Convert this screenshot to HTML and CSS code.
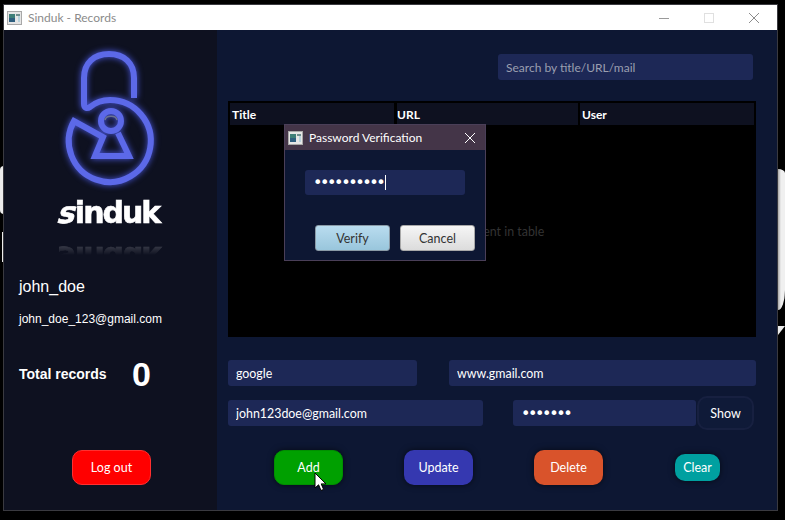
FILE: index.html
```html
<!DOCTYPE html>
<html lang="en">
<head>
  <meta charset="UTF-8">
  <meta name="viewport" content="width=device-width, initial-scale=1.0">
  <title>Sinduk - Records</title>
  <link rel="stylesheet" href="styles.css">
</head>
<body>
  <span class="blob blob-left-a"></span>
  <span class="blob blob-left-b"></span>
  <span class="blob blob-right-a"></span>
  <span class="blob blob-right-b"></span>

  <div class="window">
    <div class="titlebar">
      <svg class="app-icon" viewBox="0 0 15 14">
        <rect x="0.5" y="0.5" width="14" height="13" fill="#e6e6e6" stroke="#a8a8a8"/>
        <rect x="2" y="3" width="6" height="8" fill="#3f7f78"/>
        <rect x="2" y="7" width="6" height="4" fill="#2f5f7f"/>
        <rect x="9" y="3" width="4" height="2" fill="#6f8f8f"/>
        <rect x="11" y="5" width="2" height="6" fill="#b9d3dd"/>
      </svg>
      <span class="titlebar-text">Sinduk - Records</span>
      <div class="window-controls">
        <svg viewBox="0 0 10 10"><path d="M0 5.5H10" stroke="#9a9a9a" fill="none"/></svg>
        <svg viewBox="0 0 10 10"><rect x="0.5" y="0.5" width="9" height="9" stroke="#e0e0e0" fill="none"/></svg>
        <svg viewBox="0 0 10 10"><path d="M0 0L10 10M10 0L0 10" stroke="#8c8c8c" fill="none"/></svg>
      </div>
    </div>

    <div class="content">
      <aside class="sidebar">
        <svg class="logo" viewBox="0 0 100 150">
          <!-- shackle runs into the ring, ring ends in the keyhole -->
          <path d="M68 62V42C68 27 58 18 43 18C28 18 18 27 18 42V68C18 72 21 73 24 71C30 66 37 64 44 64A41 41 0 1 1 8 85L37 101L29 120H63L52 97" fill="none" stroke="#5c69e8" stroke-width="6"/>
          <circle cx="45" cy="85" r="10" fill="none" stroke="#5c69e8" stroke-width="6"/>
          <path d="M39 84C40 79 50 79 51 84" fill="none" stroke="#6b7390" stroke-width="1.5"/>
        </svg>
        <div class="brand"><span class="brand-s">s</span>induk</div>
        <div class="user-name">john_doe</div>
        <div class="user-mail">john_doe_123@gmail.com</div>
        <div class="totals">
          <span class="totals-label">Total records</span>
          <span class="totals-count">0</span>
        </div>
        <button class="btn btn-logout">Log out</button>
      </aside>

      <main class="main">
        <div class="search-row">
          <input class="field search" type="text" placeholder="Search by title/URL/mail">
        </div>

        <div class="table">
          <div class="table-head">
            <div class="cell cell-title">Title</div>
            <div class="cell cell-url">URL</div>
            <div class="cell cell-user">User</div>
          </div>
          <div class="table-empty">No content in table</div>
        </div>

        <div class="form-row">
          <input class="field field-title" type="text" value="google">
          <input class="field field-url" type="text" value="www.gmail.com">
        </div>
        <div class="form-row form-row-second">
          <input class="field field-mail" type="text" value="john123doe@gmail.com">
          <input class="field field-pass" type="password" value="1234567">
          <button class="btn btn-show">Show</button>
        </div>

        <div class="actions">
          <button class="btn btn-add">Add</button>
          <button class="btn btn-update">Update</button>
          <button class="btn btn-delete">Delete</button>
          <button class="btn btn-clear">Clear</button>
        </div>
      </main>
    </div>

    <div class="dialog">
      <div class="dialog-title">
        <svg class="app-icon" viewBox="0 0 15 14">
          <rect x="0.5" y="0.5" width="14" height="13" fill="#e6e6e6" stroke="#a8a8a8"/>
          <rect x="2" y="3" width="6" height="8" fill="#3f7f78"/>
          <rect x="2" y="7" width="6" height="4" fill="#2f5f7f"/>
          <rect x="9" y="3" width="4" height="2" fill="#6f8f8f"/>
          <rect x="11" y="5" width="2" height="6" fill="#b9d3dd"/>
        </svg>
        <span>Password Verification</span>
        <svg class="dialog-close" viewBox="0 0 10 10"><path d="M0 0L10 10M10 0L0 10" stroke="#ffffff" fill="none"/></svg>
      </div>
      <div class="dialog-body">
        <div class="dialog-field-wrap">
          <input class="field field-pass dialog-field" type="password" value="1234567890">
          <span class="caret"></span>
        </div>
        <div class="dialog-actions">
          <button class="dialog-btn dialog-verify">Verify</button>
          <button class="dialog-btn dialog-cancel">Cancel</button>
        </div>
      </div>
    </div>

    <svg class="cursor" viewBox="0 0 13 20">
      <path d="M1 1V16L4.6 12.8L7 18.5L9.6 17.4L7.2 11.9H12Z" fill="#ffffff" stroke="#000000"/>
    </svg>
  </div>
</body>
</html>
```

FILE: styles.css
```css
* {
  box-sizing: border-box;
}
body {
  margin: 0;
  width: 785px;
  height: 520px;
  overflow: hidden;
  position: relative;
  background-color: #000;
  font-family: Lato, sans-serif;
}

/* bits of the desktop picture showing round the window */
.blob {
  position: absolute;
  background-color: #ececec;
}
.blob-left-a {
  left: 0;
  top: 166px;
  width: 4px;
  height: 48px;
  border-radius: 4px 0 0 4px;
}
.blob-left-b {
  left: 2px;
  top: 232px;
  width: 2px;
  height: 30px;
}
.blob-right-a {
  left: 778px;
  top: 169px;
  width: 7px;
  height: 141px;
  background: linear-gradient(90deg, #a8a8a8, #f0f0f0 3px);
  border-radius: 0 7px 7px 0 / 0 4px 20px 0;
}
.blob-right-b {
  left: 778px;
  top: 326px;
  width: 7px;
  height: 9px;
  clip-path: polygon(0 0, 100% 0, 0 100%);
}

.window {
  position: absolute;
  left: 3px;
  top: 4px;
  width: 775px;
  height: 507px;
  border: 1px solid #3a3a40;
  display: flex;
  flex-direction: column;
}
.titlebar {
  height: 25px;
  flex: none;
  background-color: #fff;
  display: flex;
  align-items: center;
  padding-left: 3px;
}
.app-icon {
  width: 15px;
  height: 14px;
  flex: none;
}
.titlebar-text {
  margin-left: 6px;
  font-size: 12px;
  color: #8b8b8b;
}
.window-controls {
  margin-left: auto;
  display: flex;
  gap: 35px;
  padding-right: 18px;
}
.window-controls svg {
  width: 10px;
  height: 10px;
}

.content {
  flex: 1;
  display: flex;
  min-height: 0;
}
.sidebar {
  width: 213px;
  flex: none;
  background-color: #0e1120;
  display: flex;
  flex-direction: column;
  padding: 0 0 0 15px;
  color: #fff;
  font-family: "Liberation Sans", Arial, sans-serif;
}
.logo {
  width: 100px;
  height: 150px;
  margin: 6px 0 0 47px;
  overflow: visible;
  filter: drop-shadow(0 0 3px #4a58e0);
  flex: none;
}
.brand {
  width: 104px;
  margin: 9px 0 0 40px;
  font-family: "DejaVu Sans", sans-serif;
  font-weight: bold;
  font-size: 30px;
  line-height: 36px;
  letter-spacing: -2px;
  white-space: nowrap;
  -webkit-text-stroke: 0.6px #fff;
  -webkit-box-reflect: below 8px linear-gradient(transparent 55%, rgba(255, 255, 255, 0.3));
}
.brand-s {
  display: inline-block;
  transform: skewX(-18deg);
}
.user-name {
  margin-top: 46px;
  font-size: 16px;
  line-height: 20px;
}
.user-mail {
  margin-top: 14px;
  font-size: 12px;
  line-height: 16px;
}
.totals {
  margin-top: 27px;
  display: flex;
  align-items: center;
  height: 40px;
}
.totals-label {
  font-size: 14px;
  font-weight: bold;
  width: 113px;
}
.totals-count {
  font-size: 34px;
  font-weight: bold;
}

.btn {
  font-family: Lato, sans-serif;
  font-size: 12.5px;
  color: #fff;
  border: 1px solid transparent;
  border-radius: 10px;
  padding: 0;
  width: 69px;
  height: 35px;
  cursor: pointer;
  box-shadow: 0 0 6px rgba(0, 0, 0, 0.6);
}
.btn-logout {
  margin: 56px 0 0 53px;
  width: 79px;
  background-color: #ff0000;
  border-color: #ff3030;
  box-shadow: none;
  flex: none;
}

.main {
  flex: 1;
  background-color: #0d1733;
  padding: 24px 21px 0 11px;
}
.search-row {
  display: flex;
  justify-content: flex-end;
  padding-right: 3px;
}
.field {
  height: 26px;
  background-color: #1d2856;
  border: none;
  border-radius: 3px;
  color: #fff;
  font-family: Lato, sans-serif;
  font-size: 12.4px;
  padding: 0 8px;
  outline: none;
}
.search {
  width: 255px;
  font-size: 12px;
}
.search::placeholder {
  color: #9a9fb0;
  opacity: 1;
}

.table {
  margin-top: 21px;
  height: 236px;
  background-color: #000;
  padding-top: 2px;
  display: flex;
  flex-direction: column;
}
.table-head {
  display: flex;
  height: 22px;
  padding: 0 2px;
  flex: none;
}
.cell {
  background-color: #0e1120;
  color: #fff;
  font-size: 12px;
  font-weight: bold;
  line-height: 24px;
  padding-left: 2px;
}
.cell-title {
  width: 164px;
}
.cell-url {
  width: 181px;
  margin-left: 3px;
  padding-left: 0;
}
.cell-user {
  width: 174px;
  margin-left: 2px;
}
.table-empty {
  flex: 1;
  display: flex;
  align-items: center;
  justify-content: center;
  font-size: 12.4px;
  color: #333;
}

.form-row {
  margin-top: 23px;
  display: flex;
}
.field-title {
  width: 189px;
}
.field-url {
  width: 307px;
  margin-left: 32px;
}
.form-row-second {
  margin-top: 10px;
  height: 34px;
  align-items: center;
}
.field-mail {
  width: 255px;
}
.field-pass {
  width: 183px;
  margin-left: 30px;
  font-family: "DejaVu Sans", sans-serif;
  font-size: 16px;
  letter-spacing: -2.4px;
}
.btn-show {
  width: 57px;
  height: 34px;
  margin-left: 1px;
  background-color: #0f1a38;
  border: 2px solid #172040;
  box-shadow: none;
}

.actions {
  margin-top: 20px;
  padding-left: 46px;
  display: flex;
  align-items: center;
  gap: 61px;
}
.btn-add {
  background-color: #00a000;
  border-color: #009000;
}
.btn-update {
  background-color: #3538b0;
}
.btn-delete {
  background-color: #d9532b;
}
.btn-clear {
  width: 45px;
  height: 27px;
  margin-left: 11px;
  background-color: #00a0a0;
}

/* modal on top of the table */
.dialog {
  position: absolute;
  left: 280px;
  top: 119px;
  width: 202px;
  height: 137px;
  border: 1px solid #4a3f58;
  background-color: #0d1733;
}
.dialog-title {
  height: 25px;
  background-color: #443548;
  color: #fff;
  font-size: 12px;
  display: flex;
  align-items: center;
  padding: 0 10px 0 3px;
  gap: 6px;
}
.dialog-close {
  width: 10px;
  height: 10px;
  margin-left: auto;
}
.dialog-body {
  padding: 20px 20px 0 20px;
}
.dialog-field-wrap {
  position: relative;
  width: 160px;
}
.dialog-field {
  display: block;
  width: 160px;
  height: 25px;
  margin-left: 0;
}
.caret {
  position: absolute;
  left: 80px;
  top: 5px;
  width: 1px;
  height: 15px;
  background-color: #fff;
}
.dialog-actions {
  margin-top: 30px;
  margin-right: -10px;
  display: flex;
  justify-content: flex-end;
  gap: 10px;
}
.dialog-btn {
  width: 75px;
  height: 26px;
  padding: 0;
  border: 1px solid #8a9aa6;
  border-radius: 3px;
  font-family: Lato, sans-serif;
  font-size: 12.5px;
  color: #333;
}
.dialog-verify {
  background: linear-gradient(#b9dcef, #99c6dc);
}
.dialog-cancel {
  background: linear-gradient(#f5f5f5, #dcdcdc);
  border-color: #a8a8a8;
}

.cursor {
  position: absolute;
  left: 310px;
  top: 467px;
  width: 13px;
  height: 20px;
}
```
